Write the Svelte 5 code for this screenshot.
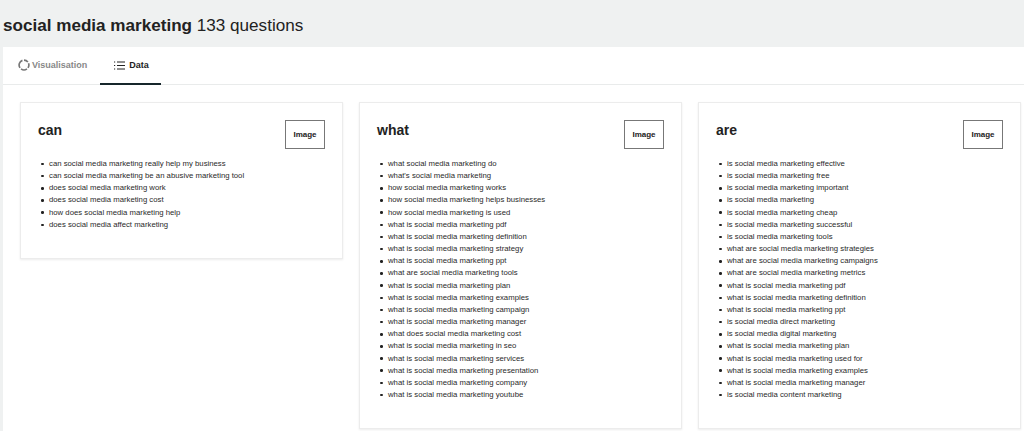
<script lang="ts">
  interface Group {
    title: string;
    questions: string[];
  }

  const groups: Group[] = [
    {
      title: 'can',
      questions: [
        'can social media marketing really help my business',
        'can social media marketing be an abusive marketing tool',
        'does social media marketing work',
        'does social media marketing cost',
        'how does social media marketing help',
        'does social media affect marketing',
      ],
    },
    {
      title: 'what',
      questions: [
        'what social media marketing do',
        "what's social media marketing",
        'how social media marketing works',
        'how social media marketing helps businesses',
        'how social media marketing is used',
        'what is social media marketing pdf',
        'what is social media marketing definition',
        'what is social media marketing strategy',
        'what is social media marketing ppt',
        'what are social media marketing tools',
        'what is social media marketing plan',
        'what is social media marketing examples',
        'what is social media marketing campaign',
        'what is social media marketing manager',
        'what does social media marketing cost',
        'what is social media marketing in seo',
        'what is social media marketing services',
        'what is social media marketing presentation',
        'what is social media marketing company',
        'what is social media marketing youtube',
      ],
    },
    {
      title: 'are',
      questions: [
        'is social media marketing effective',
        'is social media marketing free',
        'is social media marketing important',
        'is social media marketing',
        'is social media marketing cheap',
        'is social media marketing successful',
        'is social media marketing tools',
        'what are social media marketing strategies',
        'what are social media marketing campaigns',
        'what are social media marketing metrics',
        'what is social media marketing pdf',
        'what is social media marketing definition',
        'what is social media marketing ppt',
        'is social media direct marketing',
        'is social media digital marketing',
        'what is social media marketing plan',
        'what is social media marketing used for',
        'what is social media marketing examples',
        'what is social media marketing manager',
        'is social media content marketing',
      ],
    },
  ];
</script>

<header class="top">
  <h1><strong>social media marketing</strong> 133 questions</h1>
</header>

<main class="panel">
  <nav class="tabs">
    <button class="tab">
      <svg width="12" height="12" viewBox="0 0 13 13" fill="none" stroke="#777" stroke-width="1.8">
        <path d="M6.5 1.2a5.3 5.3 0 0 1 4.2 2.1" />
        <path d="M11.4 4.6a5.3 5.3 0 0 1-.6 5" />
        <path d="M9.7 10.7a5.3 5.3 0 0 1-6.4 0" />
        <path d="M2.2 9.6a5.3 5.3 0 0 1 2.6-8.1" />
      </svg>
      Visualisation
    </button>
    <button class="tab active">
      <svg width="11" height="9" viewBox="0 0 11 9" fill="none" stroke="#222" stroke-width="1">
        <path d="M0 1h1.2M0 4.5h1.2M0 8h1.2M3 1h8M3 4.5h8M3 8h8" />
      </svg>
      Data
    </button>
  </nav>

  <section class="cards">
    {#each groups as group}
      <article class="card">
        <div class="card-head">
          <h2>{group.title}</h2>
          <button class="image-btn">Image</button>
        </div>
        <ul>
          {#each group.questions as q}
            <li>{q}</li>
          {/each}
        </ul>
      </article>
    {/each}
  </section>
</main>

<style>
  :global(body) {
    background: #eff1f1;
    font-family: "Liberation Sans", Arial, sans-serif;
    height: 431px;
    overflow: hidden;
  }

  .top {
    height: 47px;
    box-sizing: border-box;
    padding: 15px 0 0 3px;
  }

  h1 {
    margin: 0;
    font-size: 17.1px;
    line-height: 22px;
    font-weight: 400;
    color: #222;
  }

  h1 strong {
    font-weight: 700;
  }

  .panel {
    margin-left: 3px;
    background: #fff;
    height: 384px;
  }

  .tabs {
    display: flex;
    height: 38px;
    box-sizing: border-box;
    padding-left: 4px;
    border-bottom: 1px solid #e9ebeb;
  }

  .tab {
    display: flex;
    align-items: center;
    gap: 2px;
    height: 35px;
    padding: 0 10px 0 11px;
    background: none;
    border: 0;
    font: 700 9px "Liberation Sans", Arial, sans-serif;
    color: #888;
    margin-right: 3px;
  }

  .tab.active {
    width: 61px;
    height: 38px;
    box-sizing: border-box;
    padding: 0 0 0 14px;
    margin-right: 0;
    color: #222;
    border-bottom: 2px solid #17262b;
    gap: 4px;
  }

  .cards {
    display: flex;
    align-items: flex-start;
    gap: 16px;
    padding: 17px 0 0 17px;
  }

  .card {
    width: 323px;
    box-sizing: border-box;
    background: #fff;
    border: 1px solid #ececec;
    box-shadow: 0 1px 2px rgba(0, 0, 0, 0.08);
    padding: 17px 17px 27px 17px;
  }

  .card-head {
    display: flex;
    justify-content: space-between;
    align-items: flex-start;
    height: 38px;
  }

  h2 {
    margin: 0;
    font-size: 14px;
    line-height: 20px;
    color: #222;
  }

  .image-btn {
    width: 40px;
    height: 29px;
    box-sizing: border-box;
    background: #fff;
    border: 1px solid #777;
    padding: 0;
    font: 700 8px "Liberation Sans", Arial, sans-serif;
    color: #222;
  }

  ul {
    margin: 0;
    padding: 0 0 0 3px;
    list-style: none;
    font-size: 7.75px;
    line-height: 12.15px;
    color: #2a2a2a;
  }

  li {
    display: flex;
    align-items: center;
    gap: 5.5px;
  }

  li::before {
    content: "";
    width: 2.5px;
    height: 2.5px;
    border-radius: 50%;
    background: #222;
  }
</style>
